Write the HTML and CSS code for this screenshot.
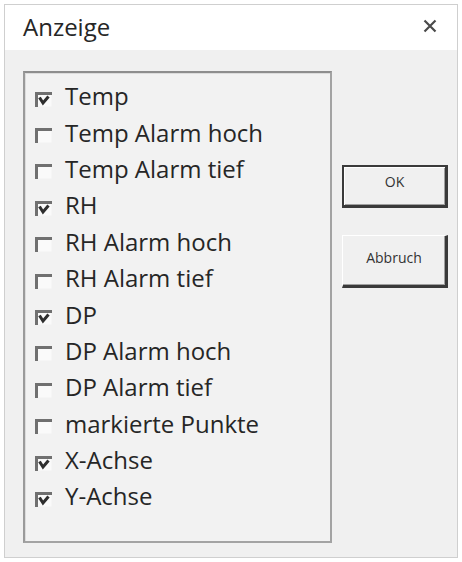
FILE: index.html
```html
<!DOCTYPE html>
<html lang="de">
<head>
<meta charset="utf-8">
<title>Anzeige</title>
<link rel="stylesheet" href="styles.css">
</head>
<body>
<div class="dialog">
  <div class="titlebar">
    <span class="title">Anzeige</span>
    <svg class="close" width="14" height="14" viewBox="0 0 14 14"><path d="M1.5 1.5L12.5 12.5M12.5 1.5L1.5 12.5" stroke="#4a4a4a" stroke-width="2.2" fill="none"/></svg>
  </div>
  <div class="content">
    <div class="listbox">
      <div class="row"><svg class="cb" viewBox="0 0 17 15"><rect x="1.5" y="1.5" width="15" height="13" fill="#fafafa"/><path d="M1.5 15V1.5H17" stroke="#707070" stroke-width="3" fill="none"/><path d="M4.5 5.5L8 11L13.5 4.5" stroke="#2e2e2e" stroke-width="3" fill="none"/></svg><span>Temp</span></div>
      <div class="row"><svg class="cb" viewBox="0 0 17 15"><rect x="1.5" y="1.5" width="15" height="13" fill="#fafafa"/><path d="M1.5 15V1.5H17" stroke="#707070" stroke-width="3" fill="none"/></svg><span>Temp Alarm hoch</span></div>
      <div class="row"><svg class="cb" viewBox="0 0 17 15"><rect x="1.5" y="1.5" width="15" height="13" fill="#fafafa"/><path d="M1.5 15V1.5H17" stroke="#707070" stroke-width="3" fill="none"/></svg><span>Temp Alarm tief</span></div>
      <div class="row"><svg class="cb" viewBox="0 0 17 15"><rect x="1.5" y="1.5" width="15" height="13" fill="#fafafa"/><path d="M1.5 15V1.5H17" stroke="#707070" stroke-width="3" fill="none"/><path d="M4.5 5.5L8 11L13.5 4.5" stroke="#2e2e2e" stroke-width="3" fill="none"/></svg><span>RH</span></div>
      <div class="row"><svg class="cb" viewBox="0 0 17 15"><rect x="1.5" y="1.5" width="15" height="13" fill="#fafafa"/><path d="M1.5 15V1.5H17" stroke="#707070" stroke-width="3" fill="none"/></svg><span>RH Alarm hoch</span></div>
      <div class="row"><svg class="cb" viewBox="0 0 17 15"><rect x="1.5" y="1.5" width="15" height="13" fill="#fafafa"/><path d="M1.5 15V1.5H17" stroke="#707070" stroke-width="3" fill="none"/></svg><span>RH Alarm tief</span></div>
      <div class="row"><svg class="cb" viewBox="0 0 17 15"><rect x="1.5" y="1.5" width="15" height="13" fill="#fafafa"/><path d="M1.5 15V1.5H17" stroke="#707070" stroke-width="3" fill="none"/><path d="M4.5 5.5L8 11L13.5 4.5" stroke="#2e2e2e" stroke-width="3" fill="none"/></svg><span>DP</span></div>
      <div class="row"><svg class="cb" viewBox="0 0 17 15"><rect x="1.5" y="1.5" width="15" height="13" fill="#fafafa"/><path d="M1.5 15V1.5H17" stroke="#707070" stroke-width="3" fill="none"/></svg><span>DP Alarm hoch</span></div>
      <div class="row"><svg class="cb" viewBox="0 0 17 15"><rect x="1.5" y="1.5" width="15" height="13" fill="#fafafa"/><path d="M1.5 15V1.5H17" stroke="#707070" stroke-width="3" fill="none"/></svg><span>DP Alarm tief</span></div>
      <div class="row"><svg class="cb" viewBox="0 0 17 15"><rect x="1.5" y="1.5" width="15" height="13" fill="#fafafa"/><path d="M1.5 15V1.5H17" stroke="#707070" stroke-width="3" fill="none"/></svg><span>markierte Punkte</span></div>
      <div class="row"><svg class="cb" viewBox="0 0 17 15"><rect x="1.5" y="1.5" width="15" height="13" fill="#fafafa"/><path d="M1.5 15V1.5H17" stroke="#707070" stroke-width="3" fill="none"/><path d="M4.5 5.5L8 11L13.5 4.5" stroke="#2e2e2e" stroke-width="3" fill="none"/></svg><span>X-Achse</span></div>
      <div class="row"><svg class="cb" viewBox="0 0 17 15"><rect x="1.5" y="1.5" width="15" height="13" fill="#fafafa"/><path d="M1.5 15V1.5H17" stroke="#707070" stroke-width="3" fill="none"/><path d="M4.5 5.5L8 11L13.5 4.5" stroke="#2e2e2e" stroke-width="3" fill="none"/></svg><span>Y-Achse</span></div>
    </div>
    <div class="buttons">
      <div class="btn btn-default">OK</div>
      <div class="btn btn-cancel">Abbruch</div>
    </div>
  </div>
</div>
</body>
</html>
```
FILE: styles.css
```css
html, body {
  margin: 0;
  padding: 0;
  background: #ffffff;
}
body {
  font-family: "Open Sans", "Noto Sans", sans-serif;
  color: #262626;
}
.dialog {
  margin: 4px 0 0 4px;
  width: 452px;
  height: 552px;
  border: 1px solid #cfcfcf;
  background: #f0f0f0;
  display: flex;
  flex-direction: column;
}
.titlebar {
  height: 45px;
  background: #ffffff;
  display: flex;
  align-items: center;
  justify-content: space-between;
  padding: 0 20px 0 18px;
  flex: none;
}
.title {
  font-size: 24px;
  line-height: 1;
  margin-top: -1px;
}
.close {
  display: block;
  margin-top: -3px;
}
.content {
  flex: 1;
  display: flex;
  padding: 21px 0 0 18px;
}
.listbox {
  width: 295px;
  height: 462px;
  border: 2px solid #a3a3a3;
  border-top-color: #8e8e8e;
  border-left-color: #9a9a9a;
  box-shadow: inset 1px 1px 0 #dcdcdc;
  background: #f2f2f2;
  padding: 6px 0 0 10px;
  box-sizing: content-box;
}
.row {
  height: 36.4px;
  display: flex;
  align-items: center;
  font-size: 24px;
  line-height: 1;
}
.row span {
  margin-top: -2px;
}
.cb {
  width: 17px;
  height: 15px;
  margin: 4px 13px 0 0;
  flex: none;
}
.buttons {
  display: flex;
  flex-direction: column;
  margin-left: 10px;
  padding-top: 94px;
  gap: 27px;
}
.btn {
  width: 106px;
  box-sizing: border-box;
  font-size: 14px;
  color: #333333;
  display: flex;
  justify-content: center;
  background: #f0f0f0;
}
.btn-default {
  height: 43px;
  border: 2px solid #3a3a3a;
  border-right-width: 3px;
  border-bottom-width: 3px;
  box-shadow: inset 1px 1px 0 #ffffff, inset -1px -1px 0 #a0a0a0;
  padding-top: 5px;
}
.btn-cancel {
  height: 53px;
  border-top: 1px solid #ffffff;
  border-left: 1px solid #ffffff;
  border-right: 3px solid #3a3a3a;
  border-bottom: 3px solid #3a3a3a;
  box-shadow: inset -1px -1px 0 #a0a0a0;
  padding-top: 12px;
}
```
